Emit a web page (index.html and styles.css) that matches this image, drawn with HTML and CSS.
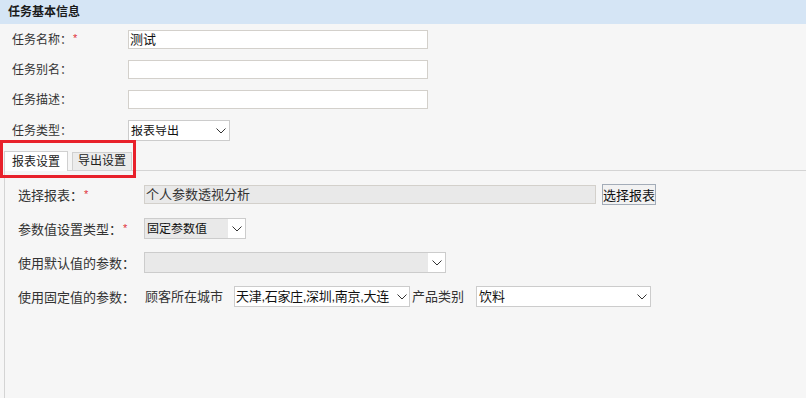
FILE: index.html
```html
<!DOCTYPE html>
<html lang="zh-CN">

<head>
    <meta charset="UTF-8">
    <title>任务基本信息</title>
    <link rel="stylesheet" href="styles.css">
</head>

<body>
    <div class="header">任务基本信息</div>

    <div class="form">
        <div class="row">
            <label class="label">任务名称<span class="colon">：</span><span class="req">*</span></label>
            <div class="input">测试</div>
        </div>
        <div class="row">
            <label class="label">任务别名<span class="colon">：</span></label>
            <div class="input"></div>
        </div>
        <div class="row">
            <label class="label">任务描述<span class="colon">：</span></label>
            <div class="input"></div>
        </div>
        <div class="row row-select">
            <label class="label">任务类型<span class="colon">：</span></label>
            <div class="select type-select">
                <span class="select-text">报表导出</span>
                <span class="arrow"><svg width="10" height="6" viewBox="0 0 10 6"><path d="M0.5 0.5 L5 5 L9.5 0.5" fill="none" stroke="#333" stroke-width="1"/></svg></span>
            </div>
        </div>
    </div>

    <div class="tab-bar">
        <div class="tab active">报表设置</div>
        <div class="tab">导出设置</div>
        <div class="mark"></div>
    </div>

    <div class="panel">
        <div class="prow">
            <label class="plabel">选择报表<span class="colon">：</span><span class="req">*</span></label>
            <div class="input readonly report-input">个人参数透视分析</div>
            <button class="btn">选择报表</button>
        </div>
        <div class="prow">
            <label class="plabel">参数值设置类型<span class="colon">：</span><span class="req">*</span></label>
            <div class="select grey mode-select">
                <span class="select-text">固定参数值</span>
                <span class="arrow"><svg width="10" height="6" viewBox="0 0 10 6"><path d="M0.5 0.5 L5 5 L9.5 0.5" fill="none" stroke="#333" stroke-width="1"/></svg></span>
            </div>
        </div>
        <div class="prow">
            <label class="plabel">使用默认值的参数<span class="colon">：</span></label>
            <div class="select grey default-select">
                <span class="select-text"></span>
                <span class="arrow"><svg width="10" height="6" viewBox="0 0 10 6"><path d="M0.5 0.5 L5 5 L9.5 0.5" fill="none" stroke="#333" stroke-width="1"/></svg></span>
            </div>
        </div>
        <div class="prow">
            <label class="plabel">使用固定值的参数<span class="colon">：</span></label>
            <span class="param-name">顾客所在城市</span>
            <div class="select city-select">
                <span class="select-text">天津,石家庄,深圳,南京,大连</span>
                <span class="arrow"><svg width="10" height="6" viewBox="0 0 10 6"><path d="M0.5 0.5 L5 5 L9.5 0.5" fill="none" stroke="#333" stroke-width="1"/></svg></span>
            </div>
            <span class="param-name second">产品类别</span>
            <div class="select product-select">
                <span class="select-text">饮料</span>
                <span class="arrow"><svg width="10" height="6" viewBox="0 0 10 6"><path d="M0.5 0.5 L5 5 L9.5 0.5" fill="none" stroke="#333" stroke-width="1"/></svg></span>
            </div>
        </div>
    </div>
</body>

</html>
```

FILE: styles.css
```css
html,
body {
    height: 100%;
}

body {
    margin: 0;
    display: flex;
    flex-direction: column;
    background-color: #f6f6f6;
    color: #222;
    font-family: "Liberation Sans", "Noto Sans CJK SC", sans-serif;
    font-size: 12px;
    line-height: 1;
}

.header {
    height: 24px;
    line-height: 24px;
    padding-left: 8px;
    background-color: #d5e5f5;
    font-weight: bold;
    color: #1a1a1a;
}

.form {
    padding: 6px 0 0 12px;
}

.row {
    display: flex;
    align-items: center;
    height: 19px;
    margin-bottom: 11px;
}

.row-select {
    height: 21px;
    margin-top: 1px;
    margin-bottom: 0;
}

.label {
    width: 116px;
    color: #333;
}

/* centred full-width colon, as in the original UI font */
.colon {
    font-family: "Noto Sans CJK JP", "Noto Sans CJK SC", sans-serif;
}

.req {
    color: #e0303a;
    margin-left: 1px;
    vertical-align: 2px;
    font-size: 11px;
}

.input {
    box-sizing: border-box;
    width: 300px;
    height: 19px;
    line-height: 17px;
    padding-left: 1px;
    background-color: #fff;
    border: 1px solid #d3d0cb;
    color: #111;
    font-size: 13px;
}

.select {
    box-sizing: border-box;
    display: flex;
    align-items: center;
    height: 21px;
    background-color: #fff;
    border: 1px solid #ccc;
    overflow: hidden;
}

.select-text {
    flex: 1;
    padding-left: 2px;
    white-space: nowrap;
    overflow: hidden;
    color: #111;
}

.arrow {
    display: flex;
    align-items: center;
    justify-content: center;
    width: 17px;
    height: 100%;
    background-color: #fff;
}

.select.grey {
    background-color: #e9e9e9;
}

.type-select {
    width: 102px;
}

/* tabs */

.tab-bar {
    position: relative;
    display: flex;
    align-items: flex-end;
    gap: 4px;
    height: 29px;
    padding-left: 4px;
}

.tab {
    box-sizing: border-box;
    height: 18px;
    padding: 0 5px;
    line-height: 17px;
    background-color: #ececec;
    border: 1px solid #d0d0d0;
    border-bottom: none;
    color: #222;
}

.tab.active {
    height: 20px;
    padding: 0 7px;
    line-height: 20px;
    background-color: #fff;
    margin-bottom: -1px;
    position: relative;
}

.mark {
    position: absolute;
    left: 0;
    top: -1px;
    width: 136px;
    height: 38px;
    box-sizing: border-box;
    border: 3px solid #e8212b;
    pointer-events: none;
}

.panel {
    flex: 1;
    margin-left: 4px;
    padding: 13px 0 0 13px;
    border-top: 1px solid #d4d4d4;
    border-left: 1px solid #d4d4d4;
    font-size: 13px;
}

.prow {
    display: flex;
    align-items: center;
    height: 21px;
    margin-bottom: 13px;
}

.plabel {
    width: 126px;
    color: #333;
}

.readonly {
    background-color: #e9e9e9;
}

.report-input {
    width: 452px;
    line-height: 17px;
    color: #333;
    padding-left: 1px;
}

.btn {
    box-sizing: border-box;
    height: 21px;
    margin-left: 6px;
    padding: 0;
    background-color: #f2f2f2;
    border: 1px solid #a3acb8;
    border-radius: 0;
    font-family: inherit;
    font-size: 13px;
    color: #111;
}

.mode-select {
    width: 102px;
    font-size: 12px;
}

.default-select {
    width: 302px;
}

.param-name {
    width: 90px;
    padding-left: 1px;
    box-sizing: border-box;
    color: #333;
}

.param-name.second {
    width: 66px;
    padding-left: 2px;
}

.city-select {
    width: 176px;
}

.city-select .select-text {
    padding-left: 1px;
    letter-spacing: -0.3px;
}

.city-select .arrow {
    width: 15px;
}

.product-select {
    width: 175px;
}
```
